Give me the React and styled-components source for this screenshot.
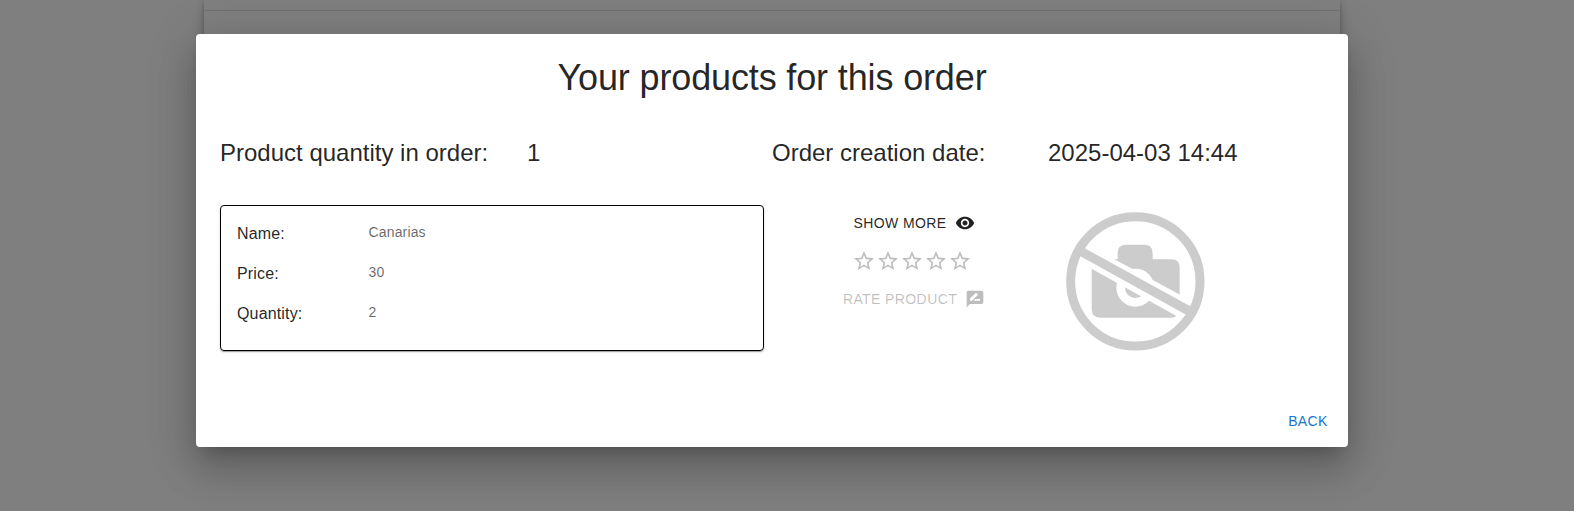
import React from "react";
import styled, { createGlobalStyle } from "styled-components";
import { MdVisibility, MdStarBorder, MdRateReview } from "react-icons/md";

const elevation24 =
  "0 11px 15px -7px rgba(0,0,0,.2), 0 24px 38px 3px rgba(0,0,0,.14), 0 9px 46px 8px rgba(0,0,0,.12)";

const GlobalStyle = createGlobalStyle`
  *, *::before, *::after { box-sizing: border-box; }
  html, body { margin: 0; overflow: hidden; }
  body {
    background: #fff;
    color: rgba(0, 0, 0, 0.87);
    font-family: "Liberation Sans", Arial, sans-serif;
  }
`;

const Page = styled.main`
  position: relative;
  width: 1574px;
  height: 511px;
  overflow: hidden;
  background: #fff;
`;

const OrdersPanel = styled.section`
  width: 1136px;
  height: 58px;
  margin-left: 204px;
  background: #fff;
  border-radius: 0 0 4px 4px;
  box-shadow: 0 -8px 6px -3px rgba(0,0,0,.2), 0 2px 4px -1px rgba(0,0,0,.2), 0 6px 10px rgba(0,0,0,.14), 0 1px 18px rgba(0,0,0,.12);
`;

const OrdersRow = styled.div`
  height: 11px;
  border-bottom: 1px solid #e0e0e0;
`;

const Backdrop = styled.div`
  position: absolute;
  inset: 0;
  padding: 34px 226px 64px 196px;
  background: rgba(0, 0, 0, 0.5);
`;

const Dialog = styled.section`
  display: flex;
  flex-direction: column;
  height: 413px;
  background: #fff;
  border-radius: 4px;
  box-shadow: ${elevation24};
`;

const Title = styled.h1`
  margin: 0;
  padding: 23px 24px 0;
  font-size: 36px;
  font-weight: 400;
  line-height: 42px;
  letter-spacing: -0.14px;
  text-align: center;
`;

const Summary = styled.div`
  display: grid;
  grid-template-columns: 307px 245px 276px 276px;
  padding: 38px 24px 0;
`;

const SummaryText = styled.p`
  margin: 0;
  font-size: 24px;
  line-height: 32px;
  white-space: nowrap;
`;

const Product = styled.div`
  display: grid;
  grid-template-columns: 544px 280px 1fr;
  column-gap: 8px;
  align-items: start;
  padding: 36px 24px 0;
`;

const DetailsCard = styled.div`
  height: 146px;
  padding: 16px;
  border: 1px solid #000;
  border-radius: 4px;
  box-shadow: 0 2px 1px -1px rgba(0,0,0,.2), 0 1px 1px rgba(0,0,0,.14), 0 1px 3px rgba(0,0,0,.12);
`;

const Detail = styled.div`
  display: grid;
  grid-template-columns: 131.5px 1fr;
  height: 40px;
`;

const DetailLabel = styled.span`
  font-size: 16px;
  line-height: 24px;
  letter-spacing: 0.00938em;
`;

const DetailValue = styled.span`
  color: rgba(0, 0, 0, 0.6);
  font-size: 14px;
  line-height: 20px;
  letter-spacing: 0.01071em;
`;

const Actions = styled.div`
  display: flex;
  flex-direction: column;
  align-items: center;
`;

const Button = styled.button`
  display: inline-flex;
  align-items: center;
  justify-content: center;
  min-width: 64px;
  padding: 6px 8px;
  border: 0;
  border-radius: 4px;
  background: transparent;
  color: ${({ $color }) => $color};
  font: 400 14px/24.5px "Liberation Sans", Arial, sans-serif;
  letter-spacing: 0.02857em;
  text-transform: uppercase;

  svg {
    width: 20px;
    height: 20px;
    margin: 0 -4px 0 8px;
  }
`;

const Rating = styled.div`
  display: flex;
  padding: 7px 0 8px;
  color: #bdbdbd;

  svg {
    width: 24px;
    height: 24px;
  }
`;

const Picture = styled.svg`
  display: block;
  width: 140px;
  height: 140px;
  margin: 6px 0 0 5px;
`;

const Footer = styled.footer`
  display: flex;
  justify-content: flex-end;
  margin-top: auto;
  padding: 8px;
`;

const details = [
  ["Name:", "Canarias"],
  ["Price:", "30"],
  ["Quantity:", "2"],
];

function NoPhoto() {
  return (
    <Picture viewBox="46 33 420 420" role="img" aria-label="No photo available">
      <path
        fill="#ccc"
        d="M126 178H204V159Q204 134 229 134H284Q309 134 309 159V178H365Q390 178 390 203V300L379 346Q378 353 366 353H151Q126 353 126 328Z"
      />
      <circle cx="257" cy="263" r="57" fill="#fff" />
      <circle cx="257" cy="263" r="31" fill="#ccc" />
      <path d="M90 122L204 183L420 300V370L379 347L80 181Z" fill="#fff" />
      <path d="M100 142L430 323L416 348L84 164Z" fill="#ccc" />
      <circle cx="257" cy="244" r="194" fill="none" stroke="#ccc" strokeWidth="27" />
    </Picture>
  );
}

export default function App() {
  return (
    <>
      <GlobalStyle />
      <Page>
        <OrdersPanel>
          <OrdersRow />
        </OrdersPanel>
        <Backdrop>
          <Dialog role="dialog" aria-modal="true">
            <Title>Your products for this order</Title>
            <Summary>
              <SummaryText>Product quantity in order:</SummaryText>
              <SummaryText>1</SummaryText>
              <SummaryText>Order creation date:</SummaryText>
              <SummaryText>2025-04-03 14:44</SummaryText>
            </Summary>
            <Product>
              <DetailsCard>
                {details.map(([label, value]) => (
                  <Detail key={label}>
                    <DetailLabel>{label}</DetailLabel>
                    <DetailValue>{value}</DetailValue>
                  </Detail>
                ))}
              </DetailsCard>
              <Actions>
                <Button $color="rgba(0,0,0,.87)">
                  Show more
                  <MdVisibility />
                </Button>
                <Rating>
                  {[1, 2, 3, 4, 5].map((star) => (
                    <MdStarBorder key={star} />
                  ))}
                </Rating>
                <Button $color="rgba(0,0,0,.26)" disabled>
                  Rate product
                  <MdRateReview />
                </Button>
              </Actions>
              <NoPhoto />
            </Product>
            <Footer>
              <Button $color="#1976d2">Back</Button>
            </Footer>
          </Dialog>
        </Backdrop>
      </Page>
    </>
  );
}
